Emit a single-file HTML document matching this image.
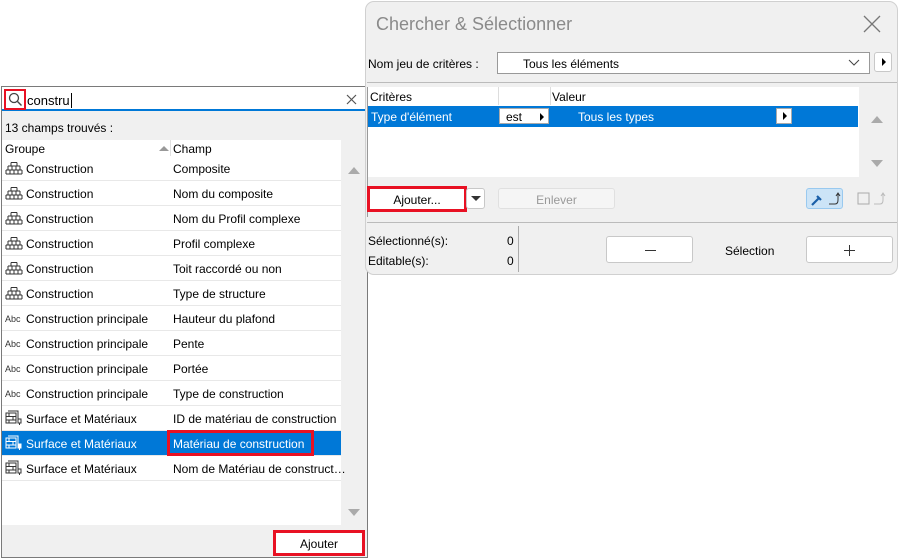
<!DOCTYPE html>
<html><head><meta charset="utf-8"><style>
*{box-sizing:border-box;margin:0;padding:0}
body{width:899px;height:559px;background:#fff;position:relative;overflow:hidden;font-family:"Liberation Sans",sans-serif;font-size:12px;color:#000}
.a{position:absolute}
#lp{left:1px;top:86px;width:367px;height:472px;border:1px solid #7a7a7a;background:#f0f0f0}
.row{position:absolute;left:0px;width:339px;height:25px;background:#fff;border-bottom:1px solid #e8e8e8}
.row span{position:absolute;top:6px;white-space:nowrap}
.row .g{left:24px}.row .c{left:171px}
.row svg{position:absolute;left:3px;top:6px}
.sel{background:#0078d7;color:#fff}
#dlg{left:365px;top:1px;width:533px;height:274px;background:#f0f0f0;border:1px solid #d0d0d0;border-radius:9px}
.btn{position:absolute;background:#fff;border:1px solid #c8c8c8;border-radius:3px;text-align:center}
.red{outline:3px solid #e81123;outline-offset:-2px}
</style></head><body>
<div id="lp" class="a">
 <div class="a" style="left:0;top:0;width:365px;height:24px;background:#fff;border-bottom:2px solid #0078d7"></div>
 <div class="a" style="left:2px;top:2px;width:22px;height:21px;border:2px solid #e81123"></div>
 <svg class="a" style="left:6px;top:5px" width="15" height="15"><circle cx="6" cy="6" r="4.5" fill="none" stroke="#444" stroke-width="1.3"/><line x1="9.5" y1="9.5" x2="13.5" y2="13.5" stroke="#444" stroke-width="1.4"/></svg>
 <div class="a" style="left:25px;top:6px;font-size:13px">constru<span style="border-left:1px solid #000;margin-left:1px"></span></div>
 <svg class="a" style="left:344px;top:7px" width="11" height="11"><path d="M1 1L10 10M10 1L1 10" stroke="#555" stroke-width="1.2"/></svg>
 <div class="a" style="left:3px;top:34px">13 champs trouvés :</div>
 <div class="a" style="left:0px;top:53px;width:339px;height:18px;background:#fff"></div>
 <div class="a" style="left:168px;top:53px;width:1px;height:18px;background:#e0e0e0"></div>
 <div class="a" style="left:3px;top:55px">Groupe</div>
 <div class="a" style="left:171px;top:55px">Champ</div>
 <div class="a" style="left:157px;top:59px;width:0;height:0;border-left:5px solid transparent;border-right:5px solid transparent;border-bottom:5px solid #999"></div>
 <div class="a" style="left:0px;top:71px;width:339px;height:367px;background:#fff"></div>
 <div class="a" style="left:339px;top:53px;width:26px;height:385px;background:#f0f0f0"></div>
 <div class="a" style="left:346px;top:80px;width:0;height:0;border-left:6px solid transparent;border-right:6px solid transparent;border-bottom:7px solid #aaa"></div>
 <div class="a" style="left:346px;top:422px;width:0;height:0;border-left:6px solid transparent;border-right:6px solid transparent;border-top:7px solid #aaa"></div>
 <div id="rows"></div>
 <div class="btn red a" style="left:272px;top:444px;width:90px;height:24px;padding-top:5px;border-radius:0">Ajouter</div>
</div>
<script>
var B='<svg width="18" height="13"><path d="M1 12h16M1 8h16M3 4h12M6 0.5h6M1 12V8M17 12V8M3 8V4M15 8V4M6 4V0.5M12 4V0.5M5 12V8M9 12V8M13 12V8M7 8V4M11 8V4" stroke="#333" stroke-width="1" fill="none"/></svg>';
var A='<svg width="18" height="13"><text x="0" y="10" font-size="9" font-family="Liberation Sans" fill="#333">Abc</text></svg>';
var S='<svg width="18" height="16" style="top:4px"><path d="M1 3h10v10H1zM1 6.5h10M1 10h10M4 3v3.5M8 6.5v3.5M4 10v3M3 1h10v2M13 1v9" stroke="#333" fill="none"/><path d="M13 9v4h3v-4zM14.5 13v2" stroke="#333" fill="#fff"/></svg>';
var d=[[B,'Construction','Composite'],[B,'Construction','Nom du composite'],[B,'Construction','Nom du Profil complexe'],[B,'Construction','Profil complexe'],[B,'Construction','Toit raccordé ou non'],[B,'Construction','Type de structure'],[A,'Construction principale','Hauteur du plafond'],[A,'Construction principale','Pente'],[A,'Construction principale','Portée'],[A,'Construction principale','Type de construction'],[S,'Surface et Matériaux','ID de matériau de construction'],[S,'Surface et Matériaux','Matériau de construction'],[S,'Surface et Matériaux','Nom de Matériau de construct…']];
var h='';d.forEach(function(r,i){h+='<div class="row'+(i==11?' sel':'')+'" style="top:'+(69+i*25)+'px">'+(i==11?r[0].replace(/#333/g,'#fff'):r[0])+'<span class="g">'+r[1]+'</span><span class="c">'+r[2]+'</span>'+(i==11?'<div class="a" style="left:165px;top:-1px;width:147px;height:26px;border:3px solid #e81123"></div>':'')+'</div>';});
document.getElementById('rows').innerHTML=h;
</script>
<div id="dlg" class="a">
 <div class="a" style="left:10px;top:12px;font-size:18px;color:#8a8a8a">Chercher &amp; Sélectionner</div>
 <svg class="a" style="left:497px;top:13px" width="18" height="18"><path d="M1 1L17 17M17 1L1 17" stroke="#777" stroke-width="1.3"/></svg>
 <div class="a" style="left:2px;top:55px">Nom jeu de critères :</div>
 <div class="a" style="left:131px;top:50px;width:373px;height:22px;background:#fff;border:1px solid #999"><span class="a" style="left:25px;top:4px">Tous les éléments</span><svg class="a" style="left:350px;top:6px" width="12" height="8"><path d="M1 1l5 5 5-5" stroke="#444" fill="none"/></svg></div>
 <div class="btn a" style="left:508px;top:50px;width:18px;height:20px"><div class="a" style="left:7px;top:5px;border-left:4px solid #000;border-top:4px solid transparent;border-bottom:4px solid transparent"></div></div>
 <div class="a" style="left:1px;top:80px;width:530px;height:1px;background:#bbb"></div>
 <div class="a" style="left:2px;top:85px;width:491px;height:90px;background:#fff"></div>
 <div class="a" style="left:1px;top:85px;width:1px;height:130px;background:#999"></div>
 <div class="a" style="left:132px;top:85px;width:1px;height:18px;background:#ddd"></div>
 <div class="a" style="left:184px;top:85px;width:1px;height:18px;background:#ddd"></div>
 <div class="a" style="left:4px;top:88px">Critères</div>
 <div class="a" style="left:186px;top:88px">Valeur</div>
 <div class="a" style="left:2px;top:104px;width:490px;height:21px;background:#0078d7;color:#fff"><span class="a" style="left:3px;top:4px">Type d'élément</span><span class="a" style="left:210px;top:4px">Tous les types</span></div>
 <div class="a" style="left:133px;top:106px;width:50px;height:16px;background:#fff;border:1px solid #aaa"><span class="a" style="left:6px;top:1px">est</span><div class="a" style="left:40px;top:4px;border-left:4px solid #000;border-top:4px solid transparent;border-bottom:4px solid transparent"></div></div>
 <div class="a" style="left:410px;top:106px;width:16px;height:16px;background:#fff;border:1px solid #aaa"><div class="a" style="left:6px;top:3px;border-left:4px solid #000;border-top:4px solid transparent;border-bottom:4px solid transparent"></div></div>
 <div class="a" style="left:505px;top:114px;border-left:6px solid transparent;border-right:6px solid transparent;border-bottom:7px solid #aaa"></div>
 <div class="a" style="left:505px;top:158px;border-left:6px solid transparent;border-right:6px solid transparent;border-top:7px solid #aaa"></div>
 <div class="btn red a" style="left:2px;top:185px;width:98px;height:24px;padding-top:5px;border-radius:0">Ajouter...</div>
 <div class="btn a" style="left:100px;top:186px;width:19px;height:21px"><div class="a" style="left:4px;top:7px;border-top:5px solid #333;border-left:5px solid transparent;border-right:5px solid transparent"></div></div>
 <div class="btn a" style="left:132px;top:186px;width:117px;height:21px;padding-top:4px;color:#999;background:#f5f5f5;border-color:#e0e0e0">Enlever</div>
 <div class="a" style="left:440px;top:186px;width:37px;height:21px;background:#cce4f7;border:1px solid #99c9ef;border-radius:3px"><svg class="a" style="left:2px;top:1px" width="33" height="18"><path d="M3 15l7-7M8 6l4 4" stroke="#1a5fa8" stroke-width="2.2"/><path d="M20 14h6q3 0 3-4V4M27 6l2-3 2 3" stroke="#333" fill="none"/></svg></div>
 <svg class="a" style="left:484px;top:188px" width="40" height="18"><rect x="8" y="3" width="11" height="11" fill="none" stroke="#aaa"/><path d="M24 14h6q3 0 3-4V4M31 6l2-3 2 3" stroke="#bbb" fill="none"/></svg>
 <div class="a" style="left:1px;top:220px;width:530px;height:1px;background:#bbb"></div>
 <div class="a" style="left:2px;top:232px">Sélectionné(s):</div><div class="a" style="left:141px;top:232px">0</div>
 <div class="a" style="left:2px;top:252px">Editable(s):</div><div class="a" style="left:141px;top:252px">0</div>
 <div class="a" style="left:152px;top:224px;width:1px;height:46px;background:#aaa"></div>
 <div class="btn a" style="left:240px;top:234px;width:87px;height:27px"><div class="a" style="left:38px;top:13px;width:11px;height:1px;background:#333"></div></div>
 <div class="a" style="left:359px;top:242px">Sélection</div>
 <div class="btn a" style="left:440px;top:234px;width:87px;height:27px"><div class="a" style="left:37px;top:13px;width:11px;height:1px;background:#333"></div><div class="a" style="left:42px;top:8px;width:1px;height:11px;background:#333"></div></div>
</div>
</body></html>
